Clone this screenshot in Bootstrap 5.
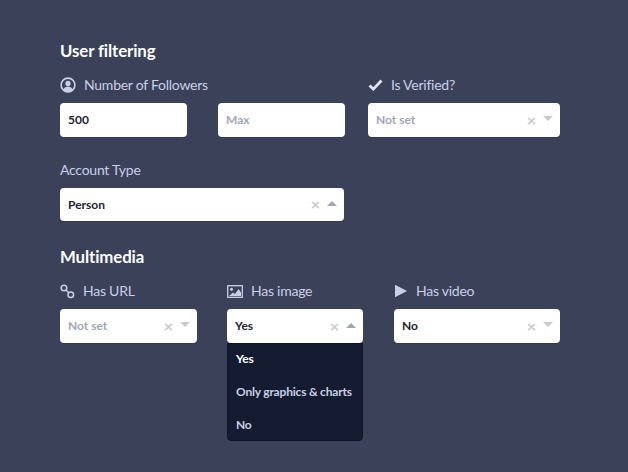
<!DOCTYPE html>
<html lang="en"><head><meta charset="utf-8"><title>User filtering</title>
<link href="https://cdn.jsdelivr.net/npm/bootstrap@5.3.0/dist/css/bootstrap.min.css" rel="stylesheet">
<style>
html,body{height:100%}
body{background:#3b4159;font-family:"Lato","Noto Sans",sans-serif;color:#c9cfe6;overflow:hidden}
.pane{padding:41px 0 0 60px;width:560px}
.sec-title{font-size:16.800px;font-weight:700;color:#fff;line-height:20px;margin:0 0 14px;letter-spacing:-.1px}
.field-label{font-size:14px;line-height:20px;height:20px;margin-bottom:8px;color:#c9cfe6;display:flex;align-items:center;letter-spacing:-.25px}
.field-label svg{flex:none;margin-right:8px}
.fbox{height:34px;background:#fff;border-radius:4px;display:flex;align-items:center;padding:0 7px 0 8px;font-size:12px;font-weight:700;color:#22242e;box-shadow:0 1px 1px rgba(0,0,0,.12)}
.fbox.muted-val{color:#a2a6b4}
.fbox.short-box{height:33px}
.fbox .val{flex:1}
.fbox .clr{color:#c8cad2;font-size:13px;line-height:1;margin-right:6px;font-weight:700;font-family:"DejaVu Sans",sans-serif}
.caret-d,.caret-u{width:0;height:0;border-left:5px solid transparent;border-right:5px solid transparent}
.caret-d{border-top:5px solid #c9cad1;margin-top:-3px}
.caret-u{border-bottom:5px solid #a3a5ae;margin-top:-2px}
.w-a{width:285px}.w-acct{width:284px}.w-b{width:192px}.w-c{width:137px}.w-d{width:136px}.w-e{width:166px}.w-f{width:127px}
.gap-x{gap:31px}.gap-y{gap:23px}
.ms-gap-a{margin-left:30px}.ms-gap-b{margin-left:31px}
.block-a{margin-bottom:23px}.block-b{margin-bottom:26px}
.drop-wrap{position:relative}
.drop-menu{position:absolute;top:100%;left:0;right:0;height:98px;background:#151b31;border-radius:0 0 4px 4px;border:1px solid #0f1424;padding:0 8px;font-size:12px;font-weight:700;color:#c9cfe6;white-space:nowrap;letter-spacing:-.2px;z-index:5}
.drop-menu .on{color:#fff;margin-top:-2px}
.drop-menu div{line-height:33px}
</style></head><body>
<div class="pane">
  <h2 class="sec-title">User filtering</h2>
  <div class="d-flex gap-y block-a">
    <div class="w-a">
      <div class="field-label"><svg width="16" height="16" viewBox="0 0 16 16"><circle cx="8" cy="8" r="6.900" fill="none" stroke="#c9cfe6" stroke-width="1.600"/><circle cx="8" cy="6.400" r="2.600" fill="#c9cfe6"/><path d="M3.400 12.600c1-2.200 2.600-3 4.600-3s3.600.8 4.600 3c-1.200 1.300-2.800 2-4.600 2s-3.400-.7-4.600-2z" fill="#c9cfe6"/></svg>Number of Followers</div>
      <div class="d-flex gap-x">
        <div class="fbox w-f">500</div>
        <div class="fbox w-f muted-val">Max</div>
      </div>
    </div>
    <div class="w-b">
      <div class="field-label"><svg width="15" height="12" viewBox="0 0 15 12"><path d="M1.500 6.500l3.800 3.600 8.200-8.600" fill="none" stroke="#dfe3f2" stroke-width="2.800"/></svg>Is Verified?</div>
      <div class="fbox muted-val"><span class="val">Not set</span><span class="clr">×</span><span class="caret-d"></span></div>
    </div>
  </div>
  <div class="block-b">
    <div class="field-label">Account Type</div>
    <div class="fbox short-box w-acct"><span class="val">Person</span><span class="clr">×</span><span class="caret-u"></span></div>
  </div>
  <h2 class="sec-title">Multimedia</h2>
  <div class="d-flex">
    <div class="w-c">
      <div class="field-label"><svg width="15" height="15" viewBox="0 0 15 15"><circle cx="4" cy="4" r="2.800" fill="none" stroke="#c9cfe6" stroke-width="1.500"/><circle cx="10.800" cy="10.800" r="2.800" fill="none" stroke="#c9cfe6" stroke-width="1.500"/><path d="M6 6l3 3" stroke="#c9cfe6" stroke-width="1.500"/></svg>Has URL</div>
      <div class="fbox muted-val"><span class="val">Not set</span><span class="clr">×</span><span class="caret-d"></span></div>
    </div>
    <div class="w-d ms-gap-a">
      <div class="field-label"><svg width="16" height="13" viewBox="0 0 16 13"><rect x=".7" y=".7" width="14.600" height="11.600" fill="none" stroke="#c9cfe6" stroke-width="1.300"/><circle cx="4.500" cy="4.200" r="1.500" fill="#c9cfe6"/><path d="M2 11l4-3.500 2 1.500 3.500-5 2.500 3.500V11z" fill="#c9cfe6"/></svg>Has image</div>
      <div class="drop-wrap">
        <div class="fbox"><span class="val">Yes</span><span class="clr">×</span><span class="caret-u"></span></div>
        <div class="drop-menu"><div class="on">Yes</div><div>Only graphics &amp; charts</div><div>No</div></div>
      </div>
    </div>
    <div class="w-e ms-gap-b">
      <div class="field-label"><svg width="14" height="14" viewBox="0 0 14 14"><path d="M1 .8L13 7 1 13.200z" fill="#c9cfe6"/></svg>Has video</div>
      <div class="fbox"><span class="val">No</span><span class="clr">×</span><span class="caret-d"></span></div>
    </div>
  </div>
</div>
</body></html>
